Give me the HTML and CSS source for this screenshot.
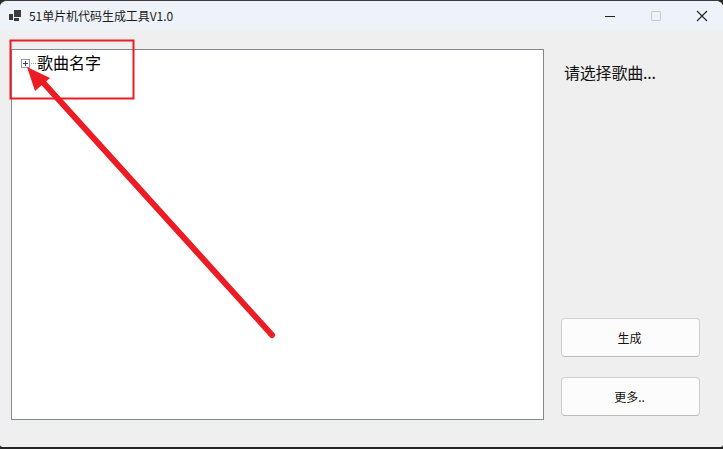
FILE: index.html
```html
<!DOCTYPE html>
<html lang="zh">
<head>
<meta charset="utf-8">
<title>51单片机代码生成工具V1.0</title>
<link rel="stylesheet" href="styles.css">
</head>
<body>
<div class="window">
  <header class="titlebar">
    <div class="title-left">
      <svg class="app-icon" width="13" height="12" viewBox="0 0 13 12"><path fill="#3c3c3c" d="M0 4h4v6H0zM5 8h5v3H5zM5 0h7v7H5z"/></svg>
      <span class="title-text">51单片机代码生成工具V1.0</span>
    </div>
    <div class="caption">
      <span class="cap-btn"><svg width="12" height="12" viewBox="0 0 12 12"><path stroke="#222" stroke-width="1" d="M1 6.5h10"/></svg></span>
      <span class="cap-btn"><svg width="12" height="12" viewBox="0 0 12 12"><rect x="1.5" y="1.5" width="9" height="9" rx="1" fill="none" stroke="#c6c6c6"/></svg></span>
      <span class="cap-btn"><svg width="12" height="12" viewBox="0 0 12 12"><path stroke="#222" stroke-width="1.1" fill="none" d="M1 1l10 10M11 1L1 11"/></svg></span>
    </div>
  </header>
  <main class="content">
    <section class="tree">
      <div class="tree-row">
        <span class="expander"><svg width="9" height="9" viewBox="0 0 9 9"><rect x=".5" y=".5" width="8" height="8" fill="#fff" stroke="#9a9a9a"/><path stroke="#2b3f7a" d="M2 4.5h5M4.5 2v5"/></svg></span>
        <span class="dots"></span>
        <span class="node-label">歌曲名字</span>
      </div>
    </section>
    <aside class="side">
      <p class="prompt">请选择歌曲...</p>
      <div class="actions">
        <button class="btn">生成</button>
        <button class="btn">更多..</button>
      </div>
    </aside>
  </main>
  <svg class="annotation" width="723" height="449" viewBox="0 0 723 449">
    <rect x="10.5" y="40.5" width="123" height="58" fill="none" stroke="#ed1c24" stroke-width="2"/>
    <path d="M272 335L40 79" stroke="#ed1c24" stroke-width="6" stroke-linecap="round" fill="none"/>
    <path d="M27 67L50 78L35 91Z" fill="#ed1c24"/>
  </svg>
</div>
</body>
</html>
```
FILE: styles.css
```css
* { box-sizing: border-box; }
html, body { margin: 0; padding: 0; }
body { width: 723px; height: 449px; overflow: hidden; background: #2a2a2a; font-family: "Liberation Sans", "Noto Sans CJK SC", sans-serif; }
.window {
  position: relative;
  width: 723px;
  height: 449px;
  display: flex;
  flex-direction: column;
  background: #efefef;
  border-top: 1px solid #3a3a3a;
  border-bottom: 2px solid #262626;
  border-radius: 7px 7px 4px 4px;
  overflow: hidden;
}
.titlebar {
  height: 29px;
  flex: none;
  display: flex;
  justify-content: space-between;
  align-items: center;
  background: #eef2f9;
}
.title-left { display: flex; align-items: center; gap: 7px; padding-left: 9px; }
.app-icon { display: block; }
.title-text { font-size: 12px; color: #1a1a1a; font-family: "Noto Sans CJK SC", sans-serif; letter-spacing: -.05px; }
.caption { display: flex; margin-right: -2px; }
.cap-btn { width: 46px; height: 29px; display: flex; align-items: center; justify-content: center; }
.content {
  flex: 1;
  display: flex;
  padding: 19px 23px 27px 11px;
  gap: 17px;
}
.tree {
  width: 533px;
  background: #fff;
  border: 1px solid #828790;
  padding: 2px 0 0 9px;
}
.tree-row { display: flex; align-items: center; height: 18px; margin-top: 1px; }
.expander { display: block; width: 9px; height: 9px; line-height: 0; margin-top: 2px; }
.dots { width: 5px; height: 0; margin: 2px 1px 0 1px; border-top: 1px dotted #a0a0a0; }
.node-label { font-size: 16px; color: #000; font-family: "Noto Sans CJK SC", sans-serif; line-height: 18px; }
.side { flex: 1; display: flex; flex-direction: column; justify-content: space-between; min-width: 0; }
.prompt { margin: 12px 0 0 3px; font-size: 16px; line-height: 22px; color: #111; font-family: "Noto Sans CJK SC", sans-serif; letter-spacing: -.2px; }
.actions { display: flex; flex-direction: column; gap: 20px; margin-bottom: 4px; }
.btn {
  width: 139px;
  height: 39px;
  background: #fcfcfc;
  border: 1px solid #d0d0d0;
  border-bottom-color: #bcbcbc;
  border-radius: 4px;
  font-size: 12px;
  color: #111;
  font-family: "Noto Sans CJK SC", sans-serif;
  padding: 0 2px 0 0;
}
.annotation { position: absolute; left: 0; top: -1px; pointer-events: none; }
```
